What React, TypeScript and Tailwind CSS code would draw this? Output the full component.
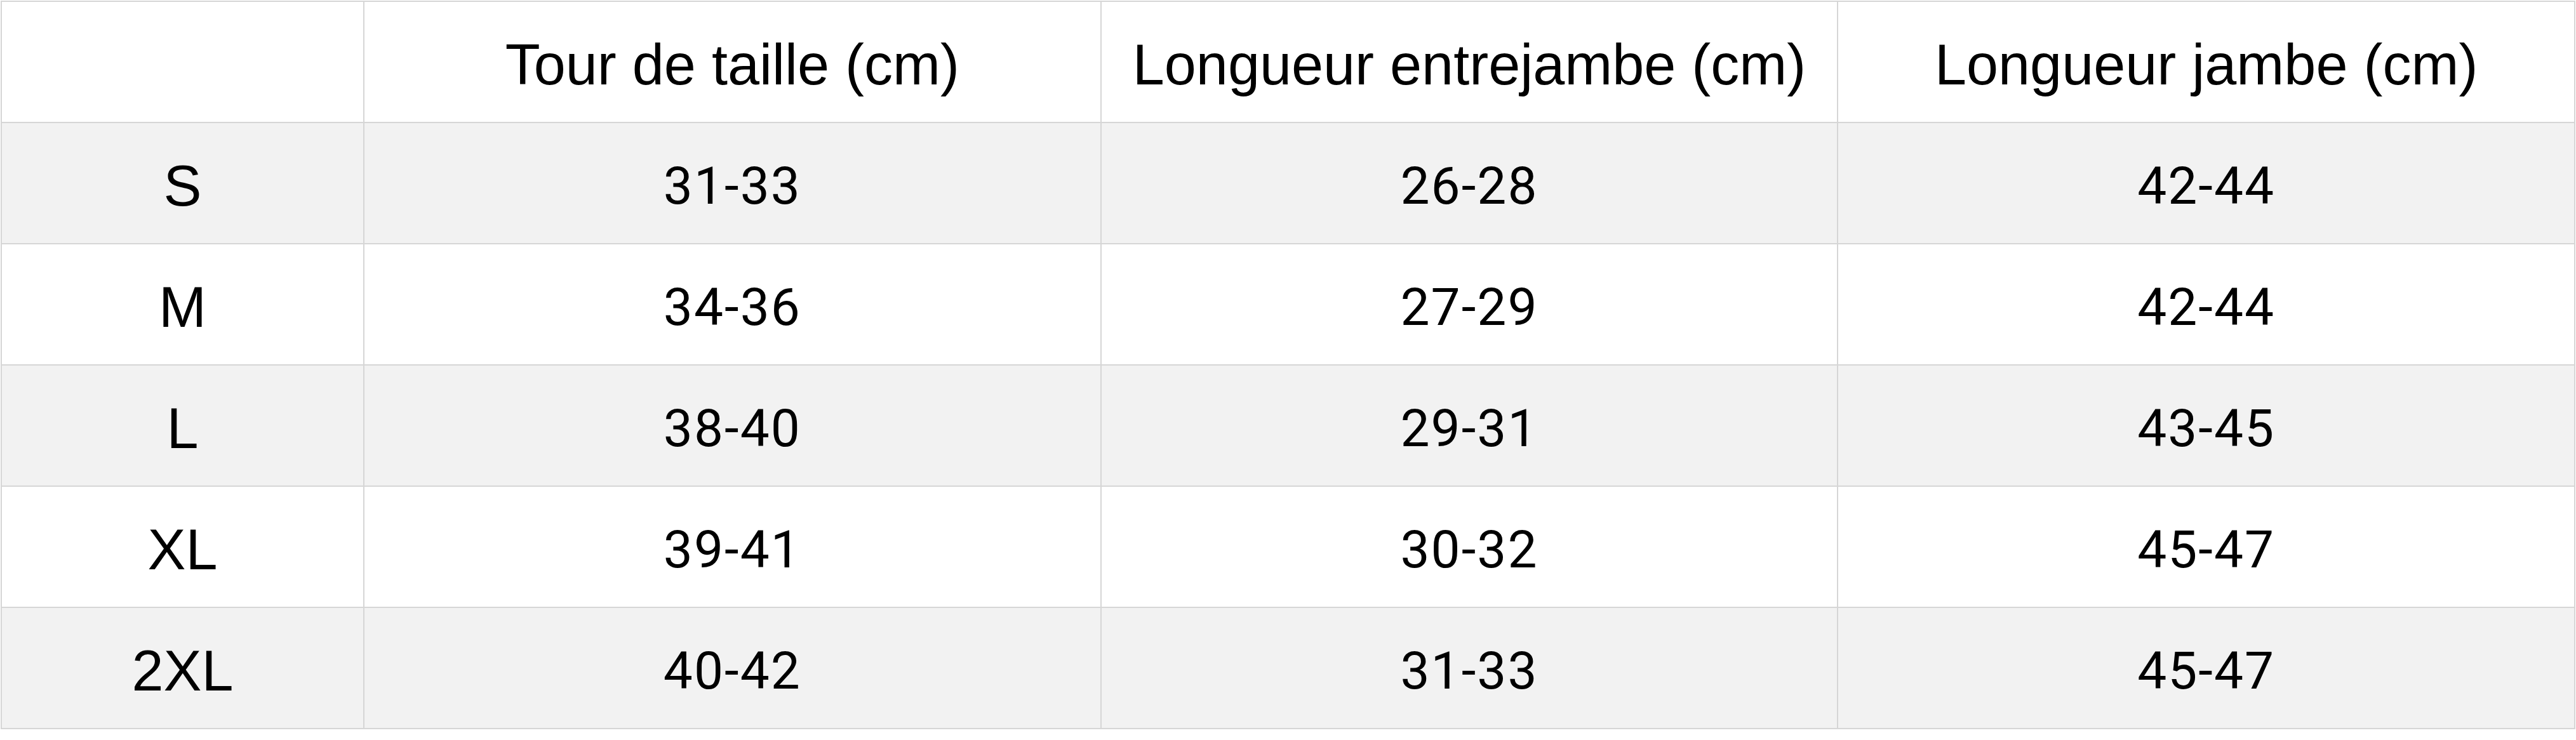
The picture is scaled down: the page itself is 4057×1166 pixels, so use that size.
const headers = ["Tour de taille (cm)", "Longueur entrejambe (cm)", "Longueur jambe (cm)"]

const rows: { size: string; values: string[] }[] = [
  { size: "S", values: ["31-33", "26-28", "42-44"] },
  { size: "M", values: ["34-36", "27-29", "42-44"] },
  { size: "L", values: ["38-40", "29-31", "43-45"] },
  { size: "XL", values: ["39-41", "30-32", "45-47"] },
  { size: "2XL", values: ["40-42", "31-33", "45-47"] },
]

const cell = "flex h-[191px] items-center justify-center border-r-2 border-b-2 border-[#d6d6d6] pt-2"

export default function App() {
  return (
    <div className="h-[1166px] w-[4057px] bg-white pt-px pl-px text-black">
      <div className="grid w-[4055px] grid-cols-[571px_1fr_1fr_1fr] border-t-2 border-l-2 border-[#d6d6d6]">
        {/* header row */}
        <div className={`${cell} bg-white`} />
        {headers.map((h) => (
          <div
            key={h}
            className={`${cell} bg-white font-['Liberation_Sans',Arial,sans-serif] text-[90px] leading-none`}
          >
            {h}
          </div>
        ))}

        {rows.map((r, i) => {
          const bg = i % 2 === 0 ? "bg-[#f2f2f2]" : "bg-white"
          return [
            <div
              key={r.size}
              className={`${cell} ${bg} font-['Liberation_Sans',Arial,sans-serif] text-[90px] leading-none`}
            >
              {r.size}
            </div>,
            ...r.values.map((v, j) => (
              <div
                key={`${r.size}-${j}`}
                className={`${cell} ${bg} font-['Roboto',sans-serif] text-[82px] font-normal tracking-[2px] leading-none`}
              >
                {v}
              </div>
            )),
          ]
        })}
      </div>
    </div>
  )
}
